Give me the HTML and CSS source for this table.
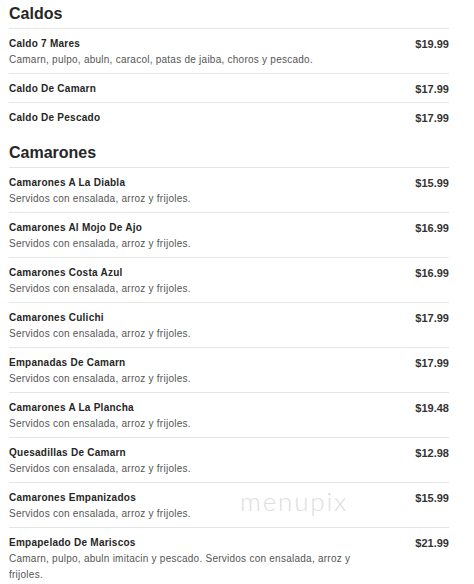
FILE: index.html
```html
<!DOCTYPE html>
<html lang="es">
<head>
<meta charset="utf-8">
<title>Menu</title>
<link rel="stylesheet" href="styles.css">
</head>
<body>
<div class="menu">
  <section class="section">
    <h2 class="section-title">Caldos</h2>
    <div class="item">
      <div class="info">
        <div class="name">Caldo 7 Mares</div>
        <div class="desc">Camarn, pulpo, abuln, caracol, patas de jaiba, choros y pescado.</div>
      </div>
      <div class="price">$19.99</div>
    </div>
    <div class="item">
      <div class="info"><div class="name">Caldo De Camarn</div></div>
      <div class="price">$17.99</div>
    </div>
    <div class="item">
      <div class="info"><div class="name">Caldo De Pescado</div></div>
      <div class="price">$17.99</div>
    </div>
  </section>
  <section class="section">
    <h2 class="section-title">Camarones</h2>
    <div class="item">
      <div class="info">
        <div class="name">Camarones A La Diabla</div>
        <div class="desc">Servidos con ensalada, arroz y frijoles.</div>
      </div>
      <div class="price">$15.99</div>
    </div>
    <div class="item">
      <div class="info">
        <div class="name">Camarones Al Mojo De Ajo</div>
        <div class="desc">Servidos con ensalada, arroz y frijoles.</div>
      </div>
      <div class="price">$16.99</div>
    </div>
    <div class="item">
      <div class="info">
        <div class="name">Camarones Costa Azul</div>
        <div class="desc">Servidos con ensalada, arroz y frijoles.</div>
      </div>
      <div class="price">$16.99</div>
    </div>
    <div class="item">
      <div class="info">
        <div class="name">Camarones Culichi</div>
        <div class="desc">Servidos con ensalada, arroz y frijoles.</div>
      </div>
      <div class="price">$17.99</div>
    </div>
    <div class="item">
      <div class="info">
        <div class="name">Empanadas De Camarn</div>
        <div class="desc">Servidos con ensalada, arroz y frijoles.</div>
      </div>
      <div class="price">$17.99</div>
    </div>
    <div class="item">
      <div class="info">
        <div class="name">Camarones A La Plancha</div>
        <div class="desc">Servidos con ensalada, arroz y frijoles.</div>
      </div>
      <div class="price">$19.48</div>
    </div>
    <div class="item">
      <div class="info">
        <div class="name">Quesadillas De Camarn</div>
        <div class="desc">Servidos con ensalada, arroz y frijoles.</div>
      </div>
      <div class="price">$12.98</div>
    </div>
    <div class="item watermarked">
      <div class="info">
        <div class="name">Camarones Empanizados</div>
        <div class="desc">Servidos con ensalada, arroz y frijoles.</div>
      </div>
      <div class="price">$15.99</div>
      <div class="watermark">menupix</div>
    </div>
    <div class="item">
      <div class="info">
        <div class="name">Empapelado De Mariscos</div>
        <div class="desc">Camarn, pulpo, abuln imitacin y pescado. Servidos con ensalada, arroz y frijoles.</div>
      </div>
      <div class="price">$21.99</div>
    </div>
  </section>
</div>
</body>
</html>
```
FILE: styles.css
```css
html, body {
  margin: 0;
  padding: 0;
  background: #ffffff;
}

body {
  font-family: "Liberation Sans", Arial, sans-serif;
  color: #222;
}

.menu {
  width: 440px;
  padding: 4px 25px 0 9px;
}

.section + .section {
  margin-top: 12px;
}

.section-title {
  margin: 0 0 4px;
  font-size: 16px;
  line-height: 20px;
  font-weight: bold;
  color: #262626;
}

.item {
  display: flex;
  justify-content: space-between;
  align-items: flex-start;
  border-top: 1px solid #e6e6e6;
  padding: 7px 0 5px;
  position: relative;
}

.info {
  flex: 1;
  min-width: 0;
}

.name {
  font-size: 10px;
  line-height: 16px;
  font-weight: bold;
  letter-spacing: 0.25px;
  color: #262626;
}

.desc {
  font-size: 10px;
  line-height: 16px;
  color: #555;
  letter-spacing: 0.25px;
  max-width: 370px;
}

.price {
  font-size: 11px;
  line-height: 16px;
  font-weight: bold;
  color: #333;
}

.watermark {
  position: absolute;
  left: 231px;
  top: 3px;
  font-family: "Lato", "Open Sans", sans-serif;
  font-weight: 300;
  font-size: 26px;
  line-height: 30px;
  letter-spacing: 1.8px;
  color: #dedede;
  pointer-events: none;
}
```
